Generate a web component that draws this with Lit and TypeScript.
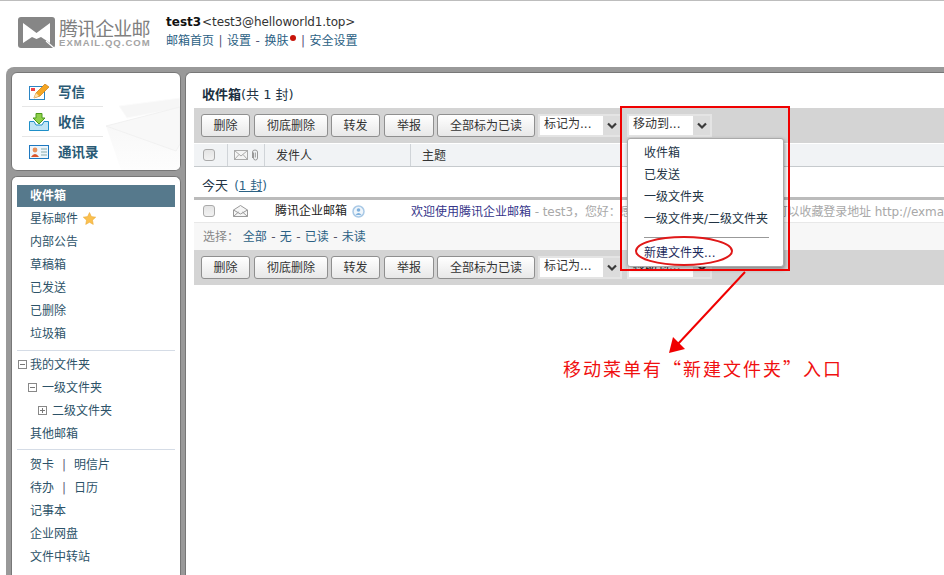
import { LitElement, html, css } from "lit";
import { customElement } from "lit/decorators.js";

const chevron = html`<svg class="chev" width="12" height="8" viewBox="0 0 12 8"><path d="M2 1.5 L6 5.5 L10 1.5" fill="none" stroke="#3a3a3a" stroke-width="2.2"/></svg>`;

const checkbox = html`<span class="cb"></span>`;

const envelopeFlat = html`<svg width="14" height="10" viewBox="0 0 14 10"><rect x=".5" y=".5" width="13" height="9" fill="#f4f4f4" stroke="#aaa"/><path d="M.5 .5 L7 6 L13.5 .5 M.5 9.5 L5 4.5 M13.5 9.5 L9 4.5" fill="none" stroke="#aaa"/></svg>`;

const clip = html`<svg width="8" height="12" viewBox="0 0 8 12"><path d="M2 3 V8.5 a2 2 0 0 0 4 0 V2.5 a2.5 2 0 0 0 -5 0 V8.5 M3.8 3 V8" transform="translate(.5 .5)" fill="none" stroke="#999"/></svg>`;

const envelopeOpen = html`<svg width="15" height="12" viewBox="0 0 15 12"><path d="M.5 5 L7.5 .5 L14.5 5 V11.5 H.5 Z" fill="#f6f6f6" stroke="#999"/><path d="M.5 5 L7.5 9 L14.5 5 M.5 11.5 L5.5 7 M14.5 11.5 L9.5 7" fill="none" stroke="#999"/></svg>`;

const tree = (open: boolean) => html`<svg class="tree" width="9" height="9" viewBox="0 0 9 9"><rect x=".5" y=".5" width="8" height="8" fill="#fff" stroke="#888"/><path d="M2 4.5 H7 ${open ? "" : "M4.5 2 V7"}" stroke="#777"/></svg>`;

const toolbar = () => html`
  <div class="toolbar">
    <button class="b w49">删除</button>
    <button class="b w74">彻底删除</button>
    <button class="b w49">转发</button>
    <button class="b w50">举报</button>
    <button class="b w98">全部标为已读</button>
    <div class="sel w84"><span>标记为...</span><i>${chevron}</i></div>
    <div class="sel w85 mv"><span>移动到...</span><i>${chevron}</i></div>
  </div>`;

@customElement("app-root")
export class AppRoot extends LitElement {
  static styles = css`
    :host { display: block; width: 944px; height: 575px; overflow: hidden; position: relative; background: #fff;
      font: 12px/1.2 "DejaVu Sans", "Noto Sans CJK SC", sans-serif; color: #333; }
    * { box-sizing: border-box; }
    .page { height: 575px; display: flex; flex-direction: column; border-top: 1px solid #bdbdbd; }
    header { height: 66px; flex: none; display: flex; padding: 13px 0 0 18px; }
    .logo { display: flex; gap: 4px; width: 148px; padding-top: 3px; }
    .logotext { display: flex; flex-direction: column; }
    .logotext b { font: 400 19px/21px "Noto Sans CJK SC", sans-serif; color: #808080; white-space: nowrap; letter-spacing: -.9px; }
    .logotext small { font: 700 9.5px/10px "Liberation Sans", sans-serif; color: #a4a4a4; white-space: nowrap; letter-spacing: 1.05px; }
    .uline { line-height: 17px; white-space: nowrap; color: #222; }
    .uline b { font-size: 12px; color: #111; }
    .uline .mail { font-size: 12px; letter-spacing: -.12px; color: #333; margin-left: 1px; }
    .links { line-height: 17px; margin-top: 2px; white-space: nowrap; color: #2b6184; display: flex; align-items: center; gap: 4.5px; }
    .links em { font-style: normal; color: #557; }
    .dot { width: 6px; height: 6px; background: #c8140a; border-radius: 50%; margin: -8px 0 0 -2.5px; }

    .shell { flex: 1; margin-left: 6px; background: #999; border-radius: 8px 0 0 0; display: flex; gap: 4px; padding: 5px 0 0 5px; min-height: 0; }
    .side { width: 170px; flex: none; display: flex; flex-direction: column; gap: 5px; }
    .card { background: #fff; border: 1px solid #777; border-radius: 6px; }
    .quick { height: 99px; padding: 4px 0 0 10px; position: relative; overflow: hidden; display: flex; flex-direction: column; flex: none; }
    .quick svg.bg { position: absolute; right: 0; bottom: 0; }
    .q { height: 30px; width: 81px; display: flex; align-items: center; gap: 9px; padding-left: 7px; font-size: 13.5px; font-weight: 700; color: #2a5a75; border-bottom: 1px solid #e6e6e6; position: relative; white-space: nowrap; }
    .q span { padding-top: 1px; }
    .q:last-child { border-bottom: 0; }
    .folders { flex: 1; padding: 8px 5px 0; border-bottom: 0; border-radius: 6px 6px 0 0; color: #2c5268; }
    .it { height: 23px; line-height: 22px; padding-left: 13px; white-space: nowrap; display: flex; align-items: center; }
    .it.on { height: 22px; background: #56798c; color: #fff; font-weight: 700; }
    .it svg.star { margin-left: 5px; }
    .it .tree { margin-right: 3px; }
    .it.t0 { padding-left: 1px; }
    .it.t1 { padding-left: 11px; }
    .it.t2 { padding-left: 21px; }
    .it.t1 .tree, .it.t2 .tree { margin-right: 5px; }
    .it .sp { color: #667; margin: 0 8px; }
    hr { border: 0; height: 1px; background: #d5dce6; margin: 0; }
    .h1 { margin-top: 5px; margin-bottom: 2px; }
    .h2 { margin-top: 4px; margin-bottom: 3px; }

    .main { flex: 1; min-width: 0; padding-left: 8px; border-right: 0; border-bottom: 0; border-radius: 6px 0 0 0; }
    .title { height: 35px; padding: 13px 0 0 8px; line-height: 17px; font-size: 13px; white-space: nowrap; color: #234; }
    .title b { font-size: 13px; color: #1c3040; }
    .toolbar { height: 35px; background: #d4d4d4; padding: 6px 0 0 7px; display: flex; white-space: nowrap; }
    .b { height: 23px; font: inherit; color: #333; background: linear-gradient(#fff, #e8e8e8); border: 1px solid #8f8f8f; border-radius: 3px; padding: 2px 0 0; margin-right: 3px; flex: none; }
    .w49 { width: 49px; margin-right: 4px; }
    .w74 { width: 74px; margin-right: 3px; }
    .w50 { width: 50px; margin-right: 3px; }
    .w98 { width: 98px; margin-right: 3px; }
    .sel { height: 23px; background: #fff; border: 2px solid #e4e4e4; display: flex; justify-content: space-between; flex: none; }
    .sel span { padding-left: 4px; line-height: 17px; }
    .sel i { width: 17px; background: #dcdcdc; display: flex; align-items: center; justify-content: center; }
    .w84 { width: 84px; }
    .w85 { width: 85px; margin-left: 5px; }
    .thead { margin-top: 1px; height: 23px; background: #f1f3f5; border-bottom: 1px solid #c6cacd; display: flex; align-items: center; }
    .c0 { width: 33px; flex: none; padding-left: 9px; display: flex; }
    .c1 { width: 37px; flex: none; display: flex; align-items: center; gap: 3px; padding-left: 6px; height: 100%; }
    .c2 { width: 147px; flex: none; padding-left: 11px; height: 100%; display: flex; align-items: center; white-space: nowrap; gap: 5px; }
    .c3 { flex: 1; margin-left: -1px; padding-left: 1px; min-width: 0; white-space: nowrap; overflow: hidden; }
    .thead .c1, .thead .c2 { border-left: 1px solid #d0d4d8; }
    .thead .c2 { padding: 3px 0 0 11px; width: 147px; }
    .thead .c3 { border-left: 1px solid #d0d4d8; padding: 3px 0 0 11px; height: 100%; display: flex; align-items: center; }
    .cb { width: 12px; height: 12px; border: 1px solid #aaa; border-radius: 3px; background: linear-gradient(#e4e4e4, #f2f2f2); display: block; }
    .day { padding: 10px 0 0 8px; border-bottom: 3px solid #bbb; line-height: 17px; font-size: 13px; height: 33px; color: #234; white-space: nowrap; }
    .day a { color: #2b6184; font-size: 12px; margin-left: 2px; }
    .day u { text-decoration: underline; }
    .row { height: 23px; display: flex; align-items: center; border-bottom: 1px solid #e8e8e8; }
    .row .c2 { color: #222; }
    .row .c3 { padding-top: 2px; }
    .subj { color: #35358a; }
    .gray { color: #a8a8a8; letter-spacing: -.08px; }
    .pick { height: 27px; background: #f7f7f7; padding: 0 0 0 9px; line-height: 28px; color: #2b6184; white-space: nowrap; }
    .pick span { color: #888; }
    .pick em { font-style: normal; color: #556; margin: 0 .5px; }

    .menu { position: absolute; left: 627px; top: 138px; width: 157px; height: 129px; background: #fff; border: 1px solid #aaa; border-radius: 3px; box-shadow: 1px 2px 4px rgba(0,0,0,.4); padding: 3px 0 0 16px; color: #234; }
    .menu div { height: 22px; line-height: 22px; white-space: nowrap; }
    .menu hr { width: 125px; height: 1px; background: #999; margin: 7px 0 4px; }
    .menu .new { color: #1c2a5c; }
    .anno { position: absolute; inset: 0; pointer-events: none; }
    .note { position: absolute; left: 563px; top: 356px; font: 18px/24px "Noto Sans CJK SC", sans-serif; letter-spacing: 2px; color: #f01010; white-space: nowrap; }
  `;

  render() {
    return html`
      <div class="page">
        <header>
          <div class="logo">
            <svg width="37" height="31" viewBox="0 0 37 31">
              <rect width="37" height="31" rx="3" fill="#868686"/>
              <path d="M5 6 L18.5 16 L32 6 V26 L23 20 L18.5 22 L14 20 L5 26 Z" fill="#fff"/>
              <path d="M28 24 L36 31" stroke="#fff" stroke-width="1.2"/>
            </svg>
            <div class="logotext"><b>腾讯企业邮</b><small>EXMAIL.QQ.COM</small></div>
          </div>
          <div class="user">
            <div class="uline"><b>test3</b><span class="mail">&lt;test3@helloworld1.top&gt;</span></div>
            <div class="links"><span>邮箱首页</span><em>|</em><span>设置</span><em>-</em><span>换肤</span><i class="dot"></i><em>|</em><span>安全设置</span></div>
          </div>
        </header>
        <div class="shell">
          <div class="side">
            <div class="card quick">
              <svg class="bg" width="75" height="74" viewBox="0 0 75 74">
                <defs><linearGradient id="e" x1="0" y1="0" x2="0" y2="1"><stop offset="0" stop-color="#f6f6f6"/><stop offset="1" stop-color="#fdfdfd"/></linearGradient></defs>
                <path d="M14 10 L75 2 V12 L22 22 Z" fill="#f6f6f6" stroke="#fbfbfb"/>
                <path d="M1 30 L75 11 V74 H16 Z" fill="url(#e)"/>
                <path d="M1 30 L75 11 V48 L71 55 Z" fill="#f8f8f8" stroke="#eeeeee" stroke-width=".7"/>
              </svg>
              <div class="q">
                <svg width="20" height="16" viewBox="0 0 20 16"><rect x=".5" y="2.5" width="15" height="13" fill="#fff" stroke="#2b85c4"/><rect x="2" y="4" width="4" height="3" fill="#e44"/><path d="M5 14 L7 9 L16 0 L20 3 L11 12 Z" fill="#f5a623" stroke="#c97a10" stroke-width=".7"/><path d="M5 14 L7 9 L10 12 Z" fill="#fde3b0"/></svg>
                <span>写信</span></div>
              <div class="q">
                <svg width="20" height="18" viewBox="0 0 20 18"><path d="M.5 8.5 H5 L7 12 H13 L15 8.5 H19.5 V17.5 H.5 Z" fill="#bfe4f5" stroke="#1e8fc8"/><path d="M7 0.5 H13 V5 H16 L10 11 L4 5 H7 Z" fill="#8fd04a" stroke="#4c9a1c"/></svg>
                <span>收信</span></div>
              <div class="q">
                <svg width="20" height="14" viewBox="0 0 20 14"><rect x=".5" y=".5" width="19" height="13" fill="#eef6fc" stroke="#1e78c0"/><circle cx="6" cy="5" r="2.4" fill="#e8905a"/><path d="M2 12 Q6 6 10 12 Z" fill="#d9542b"/><path d="M12 4 H18 M12 7 H18 M12 10 H18" stroke="#8aa" /></svg>
                <span>通讯录</span></div>
            </div>
            <div class="card folders">
              <div class="it on">收件箱</div>
              <div class="it">星标邮件<svg class="star" width="13" height="13" viewBox="0 0 24 24"><path d="M12 1 L15.5 8.5 L23.5 9.5 L17.5 15 L19 23 L12 19 L5 23 L6.5 15 L.5 9.5 L8.5 8.5 Z" fill="#fbc04e" stroke="#e8a835"/></svg></div>
              <div class="it">内部公告</div>
              <div class="it">草稿箱</div>
              <div class="it">已发送</div>
              <div class="it">已删除</div>
              <div class="it">垃圾箱</div>
              <hr class="h1"/>
              <div class="it t0">${tree(true)}我的文件夹</div>
              <div class="it t1">${tree(true)}一级文件夹</div>
              <div class="it t2">${tree(false)}二级文件夹</div>
              <div class="it">其他邮箱</div>
              <hr class="h2"/>
              <div class="it">贺卡<span class="sp">|</span>明信片</div>
              <div class="it">待办<span class="sp">|</span>日历</div>
              <div class="it">记事本</div>
              <div class="it">企业网盘</div>
              <div class="it">文件中转站</div>
            </div>
          </div>
          <div class="card main">
            <div class="title"><b>收件箱</b>(共 1 封)</div>
            ${toolbar()}
            <div class="thead">
              <div class="c0">${checkbox}</div>
              <div class="c1">${envelopeFlat}${clip}</div>
              <div class="c2">发件人</div>
              <div class="c3">主题</div>
            </div>
            <div class="day">今天 <a>(<u>1 封</u>)</a></div>
            <div class="row">
              <div class="c0">${checkbox}</div>
              <div class="c1">${envelopeOpen}</div>
              <div class="c2"><span>腾讯企业邮箱</span>
                <svg width="13" height="13" viewBox="0 0 13 13"><circle cx="6.5" cy="6.5" r="5.5" fill="#eef5fb" stroke="#a9c9e6" stroke-width="1.5"/><circle cx="6.5" cy="5" r="1.8" fill="#7fb0dc"/><path d="M3.5 10 Q6.5 6 9.5 10 Z" fill="#7fb0dc"/></svg>
              </div>
              <div class="c3"><span class="subj">欢迎使用腾讯企业邮箱</span><span class="gray"> - test3，您好：感谢您使用腾讯企业邮箱，您可以收藏登录地址 http://exmail.qq.com</span></div>
            </div>
            <div class="pick"><span>选择：</span> 全部 <em>-</em> 无 <em>-</em> 已读 <em>-</em> 未读</div>
            ${toolbar()}
          </div>
        </div>
      </div>
      <div class="menu">
        <div>收件箱</div>
        <div>已发送</div>
        <div>一级文件夹</div>
        <div>一级文件夹/二级文件夹</div>
        <hr/>
        <div class="new">新建文件夹...</div>
      </div>
      <svg class="anno" width="944" height="575" viewBox="0 0 944 575">
        <rect x="621" y="107" width="168" height="163" fill="none" stroke="#f00000" stroke-width="2"/>
        <ellipse cx="684" cy="251" rx="48" ry="14" fill="none" stroke="#e01818" stroke-width="2"/>
        <path d="M745 272 L677 345" stroke="#f00000" stroke-width="2" fill="none"/>
        <path d="M669 353 L673 337 L685 349 Z" fill="#f00000"/>
      </svg>
      <div class="note">移动菜单有“新建文件夹”入口</div>
    `;
  }
}
